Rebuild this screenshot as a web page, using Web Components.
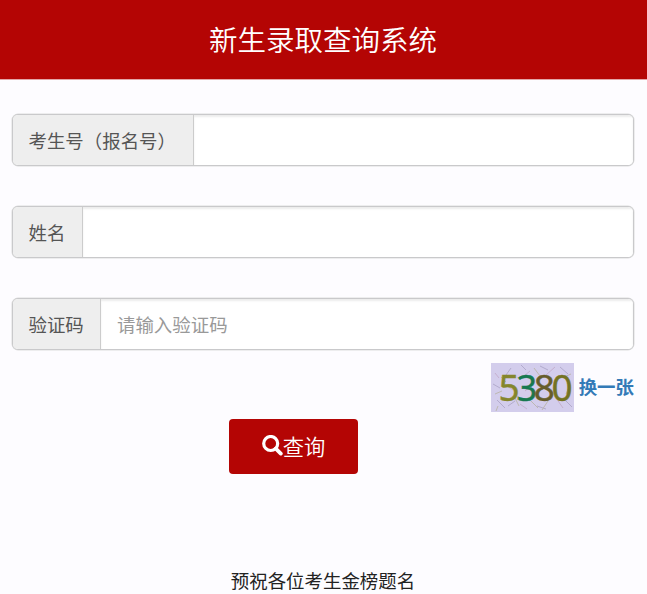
<!DOCTYPE html>
<html lang="zh-CN">
<head>
<meta charset="utf-8">
<title>新生录取查询系统</title>
<style>
html,body{margin:0;height:100%;overflow:hidden}
body{background:#fdfcff;font-family:"Noto Sans CJK SC",sans-serif;font-size:18.45px;color:#222}
</style>
</head>
<body>
<admission-page></admission-page>
<script>
const define = (name, html) => customElements.define(name, class extends HTMLElement {
  constructor() {
    super();
    this.attachShadow({ mode: 'open' }).innerHTML = html;
  }
});

define('page-header', `<style>
:host{display:flex;flex:none;box-sizing:border-box;height:80px;padding:0 1px 1px 0;align-items:center;justify-content:center;background:#b40504;border-bottom:1px solid #e3a6a8;background-clip:padding-box;color:#fff}
h1{margin:0;font-size:28.5px;font-weight:350;line-height:40px}
</style><h1><slot></slot></h1>`);

customElements.define('input-group', class extends HTMLElement {
  constructor() {
    super();
    this.attachShadow({ mode: 'open' }).innerHTML = `<style>
:host{display:flex;box-sizing:border-box;height:52px;border:1px solid #c9c9cb;border-radius:6px;background:#fff;overflow:hidden;box-shadow:0 0 0 .5px #ddd}
label{flex:none;box-sizing:border-box;width:var(--label-width);padding:0 0 1px 15.5px;display:flex;align-items:center;background:#eee;border-right:1px solid #ccc;color:#555;white-space:nowrap}
input{flex:1;min-width:0;border:0;outline:0;padding:0 16px 1px;background:#fff;font:inherit;color:#555;box-shadow:inset 0 2px 2px rgba(0,0,0,.075)}
input::placeholder{color:#999;opacity:1}
</style><label for="f"><slot></slot></label><input id="f">`;
  }
  connectedCallback() {
    this.shadowRoot.querySelector('input').placeholder = this.getAttribute('placeholder') || '';
  }
});

define('captcha-image', `<style>
:host{display:block;width:83px;height:49px}
svg{display:block;overflow:visible}
text{font-family:"Noto Sans",sans-serif;font-size:37px;letter-spacing:-3.5px}
</style>
<svg width="83" height="49" viewBox="0 0 83 49">
<defs><linearGradient id="ink" gradientUnits="userSpaceOnUse" x1="0" y1="0" x2="83" y2="0">
<stop offset=".33" stop-color="#85862c"/><stop offset=".34" stop-color="#17794f"/>
<stop offset=".51" stop-color="#17794f"/><stop offset=".53" stop-color="#665d2b"/>
<stop offset=".74" stop-color="#665d2b"/><stop offset=".76" stop-color="#747322"/>
</linearGradient></defs>
<rect width="83" height="49" fill="#d3cdec"/>
<g fill="none" stroke-width=".9" opacity=".5">
<path stroke="#8c83a8" d="M20 5l-5 7M30 2l5 5M49 3l8 4M69 4l8 7M2 21l7 4M6 37l8 8M17 43l7-5M46 43l9 3M75 38l6 6M79 22l-4 9"/>
<path stroke="#a4a06a" d="M10 14l5 5M43 5l6 8M73 14l7-3M4 31l7-3M23 33l5 10M40 38l7 7M57 38l-6 9M7 43l-2 5"/>
<path stroke="#b58daa" d="M4 10l4 5M33 13l6-5M55 12l9-8M29 41l7 5M65 35l7 10M16 23l6 4M42 21l-8 7"/>
</g>
<text x="7.5" y="37.5" fill="url(#ink)" stroke="url(#ink)" stroke-width=".4">5380</text>
</svg>`);

define('captcha-row', `<style>
:host{display:flex;justify-content:flex-end;gap:5px;height:49px}
a{color:#337ab7;font-weight:700;line-height:46px;text-decoration:none}
</style><captcha-image></captcha-image><a href="#"><slot></slot></a>`);

define('search-button', `<style>
:host{display:block;width:129px;height:55px}
button{display:flex;width:100%;height:100%;box-sizing:border-box;padding:0 0 1px;align-items:center;justify-content:center;border:0;border-radius:4px;background:#b40504;color:#fff;font:350 21.3px/30px "Noto Sans CJK SC",sans-serif}
svg{flex:none;margin-bottom:2px}
</style><button type="button"><svg width="21" height="21" viewBox="0 0 21 21" fill="none" stroke="#fff"><circle cx="8.7" cy="8.5" r="7" stroke-width="3.2"/><path d="M13.8 13.6l5 5" stroke-width="3.8" stroke-linecap="round"/></svg><slot></slot></button>`);

define('admission-page', `<style>
:host{display:flex;flex-direction:column;height:594px}
form{display:grid;gap:40px;padding:34px 13px 0 12px}
captcha-row{margin:13px 13px 0 0}
search-button{margin:7px 0 0 229px}
footer{margin-top:92px;text-align:center;line-height:28px;padding-right:1px}
</style>
<page-header>新生录取查询系统</page-header>
<form>
<input-group style="--label-width:181px">考生号（报名号）</input-group>
<input-group style="--label-width:70px">姓名</input-group>
<input-group style="--label-width:88px" placeholder="请输入验证码">验证码</input-group>
</form>
<captcha-row>换一张</captcha-row>
<search-button>查询</search-button>
<footer>预祝各位考生金榜题名</footer>`);
</script>
</body>
</html>
